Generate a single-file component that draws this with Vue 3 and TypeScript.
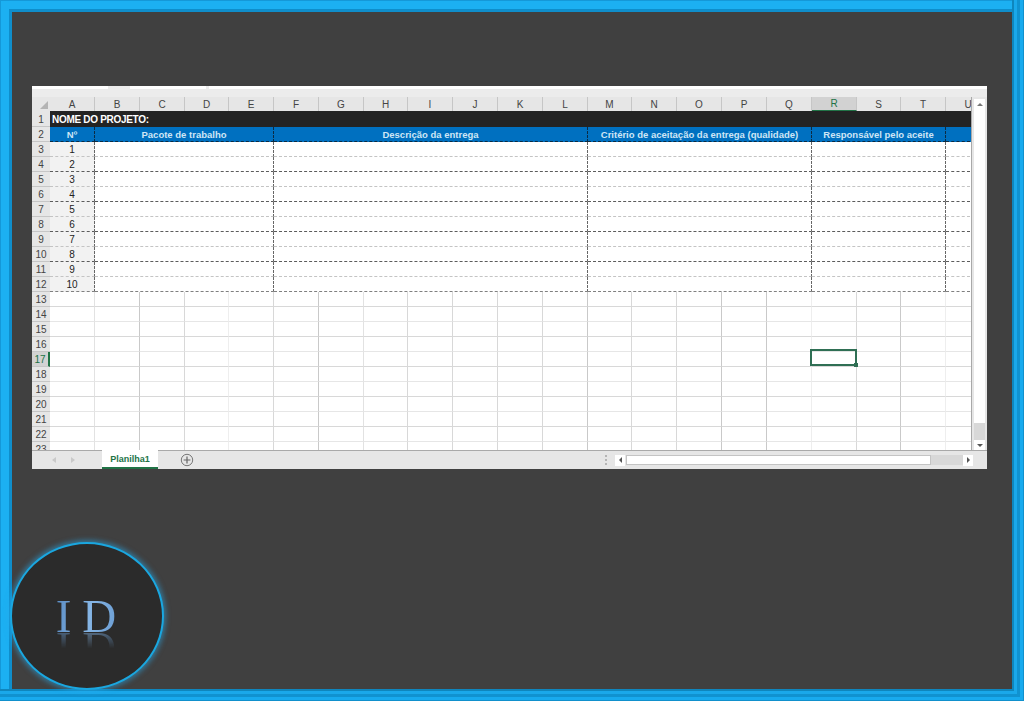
<template>
  <div class="page">
    <div class="sheet">
      <div class="top-strip">
        <span class="piece p1"></span>
        <span class="piece p2"></span>
        <span class="piece p3"></span>
      </div>
      <div class="grid">
        <div class="corner"><span class="tri"></span></div>
        <div
          v-for="c in columns"
          :key="c"
          class="col-head"
          :class="{ picked: c === 'R' }"
        >{{ c }}</div>

        <div class="row-head">1</div>
        <div class="title">NOME DO PROJETO:</div>

        <div class="row-head">2</div>
        <div
          v-for="h in headers"
          :key="h.label"
          class="blue"
          :style="{ gridColumn: `span ${h.span}` }"
        >{{ h.label }}</div>

        <template v-for="n in 10" :key="n">
          <div class="row-head">{{ n + 2 }}</div>
          <div class="num" :class="rowLine(n)">{{ n }}</div>
          <div
            v-for="h in headers.slice(1)"
            :key="h.span + h.label"
            class="entry"
            :class="rowLine(n)"
            :style="{ gridColumn: `span ${h.span}` }"
          ></div>
        </template>

        <template v-for="r in emptyRows" :key="r">
          <div class="row-head" :class="{ active: r === 17 }">{{ r }}</div>
          <div
            v-for="(c, i) in columns"
            :key="c"
            class="cell"
            :class="[`v${lineWeights[i]}`, r % 2 ? 'h1' : 'h2']"
          >
            <div v-if="r === 17 && c === 'R'" class="selection"><span class="handle"></span></div>
          </div>
        </template>
      </div>

      <div class="vscroll">
        <button class="sq"><span class="up"></span></button>
        <div class="thumb"></div>
        <div class="track"></div>
        <button class="sq"><span class="down"></span></button>
      </div>

      <div class="tabs">
        <div class="nav">
          <span class="arrow left"></span>
          <span class="arrow right"></span>
        </div>
        <div class="tab">Planilha1</div>
        <div class="add">
          <svg width="14" height="14" viewBox="0 0 14 14">
            <circle cx="7" cy="7" r="5.7" fill="none" stroke="#777" stroke-width="1" />
            <path d="M7 3.6v6.8M3.6 7h6.8" stroke="#666" stroke-width="1.2" />
          </svg>
        </div>
        <div class="dots"><i></i><i></i><i></i></div>
        <div class="hscroll">
          <button class="sq"><span class="tleft"></span></button>
          <div class="hthumb"></div>
          <div class="htrack"></div>
          <button class="sq"><span class="tright"></span></button>
        </div>
      </div>
    </div>

    <div class="logo">
      <span class="letters">I D</span>
    </div>
  </div>
</template>

<script setup lang="ts">
const columns = 'ABCDEFGHIJKLMNOPQRSTU'.split('')

const headers = [
  { label: 'Nº', span: 1 },
  { label: 'Pacote de trabalho', span: 4 },
  { label: 'Descrição da entrega', span: 7 },
  { label: 'Critério de aceitação da entrega (qualidade)', span: 5 },
  { label: 'Responsável pelo aceite', span: 3 },
  { label: '', span: 1 },
]

const emptyRows = Array.from({ length: 11 }, (_, i) => i + 13)

// the blurry capture draws some gridlines stronger than others
const lineWeights = [1, 3, 2, 0, 2, 3, 1, 2, 2, 2, 2, 3, 2, 2, 3, 3, 0, 2, 3, 0, 3]

function rowLine(n: number) {
  if (n === 10) return 'end'
  return n % 2 ? 'soft' : 'hard'
}
</script>

<style>
html,
body {
  margin: 0;
  background: #404040;
}
</style>

<style scoped>
.page {
  position: relative;
  width: 1024px;
  height: 701px;
  box-sizing: border-box;
  padding: 86px 0 0 32px;
  overflow: hidden;
  background: #404040;
  font-family: "Liberation Sans", Arial, sans-serif;
  box-shadow:
    inset -1px -1px 0 #1190cc,
    inset -4px -4px 0 #18aaee,
    inset -7px -7px 0 #1092d0,
    inset -10px -10px 0 #1aa8ea,
    inset -12px -12px 0 #0f86bd,
    inset 1px 1px 0 #1598d8,
    inset 9px 9px 0 #1cb0f2,
    inset 12px 12px 0 #0f8ecb;
}
.sheet {
  width: 955px;
  height: 383px;
  background: #e6e6e6;
  overflow: hidden;
  display: grid;
  grid-template-columns: 940px 15px;
  grid-template-rows: 11px 353px 19px;
}
.top-strip {
  grid-column: 1 / 3;
  display: flex;
  align-items: flex-start;
  background: #ececec;
}
.piece {
  height: 3px;
  background: #fff;
}
.p1 { width: 76px; }
.p2 { width: 76px; margin-left: 22px; }
.p3 { flex: 1; margin-left: 3px; }
.grid {
  display: grid;
  grid-template-columns: 18px 45px 45px 45px 44px 45px 45px 45px 44px 45px 45px 45px 45px 44px 45px 45px 45px 45px 45px 44px 45px 45px;
  grid-template-rows: 14px 16px 15px repeat(10, 15px) repeat(11, 15px);
  background: #fff;
  overflow: hidden;
  border-right: 1px solid #a9a9a9;
  font-size: 10px;
  color: #333;
}
.corner {
  background: #e6e6e6;
  position: relative;
}
.tri {
  position: absolute;
  right: 2px;
  bottom: 2px;
  width: 0;
  height: 0;
  border-style: solid;
  border-width: 0 0 8px 8px;
  border-color: transparent transparent #b4b4b4 transparent;
}
.col-head {
  display: flex;
  align-items: center;
  justify-content: center;
  background: #e6e6e6;
  border-right: 1px solid #c6c6c6;
  box-sizing: border-box;
  color: #444;
}
.picked {
  background: #d2d2d2;
  border-bottom: 1px solid #217346;
  color: #217346;
}
.row-head {
  display: flex;
  align-items: center;
  justify-content: center;
  background: #e6e6e6;
  border-bottom: 1px solid #c6c6c6;
  box-sizing: border-box;
  color: #444;
  font-size: 10px;
  padding-top: 1px;
}
.row-head.active {
  background: #d2d2d2;
  border-right: 2px solid #217346;
  color: #217346;
}
.title {
  grid-column: span 21;
  display: flex;
  align-items: center;
  background: #232323;
  color: #fff;
  font-weight: bold;
  font-size: 10px;
  letter-spacing: -0.3px;
  padding-left: 2px;
}
.blue {
  display: flex;
  align-items: center;
  justify-content: center;
  box-sizing: border-box;
  background: #0070c0;
  color: #cfe6f5;
  font-weight: bold;
  font-size: 9.5px;
  border-right: 1px dashed #0b2b44;
  border-bottom: 1px dashed #0b2b44;
  white-space: nowrap;
  overflow: hidden;
}
.num {
  display: flex;
  align-items: center;
  justify-content: center;
  box-sizing: border-box;
  background: #f2f2f2;
  color: #222;
  font-size: 10px;
  border-right: 1px dashed #666;
}
.entry {
  box-sizing: border-box;
  background: #fff;
  border-right: 1px dashed #666;
}
.soft {
  border-bottom: 1px dashed #c4c4c4;
}
.hard {
  border-bottom: 1px dashed #5c5c5c;
}
.end {
  border-bottom: 1px dashed #808080;
}
.cell {
  position: relative;
  box-sizing: border-box;
  background: #fff;
}
.v0 { border-right: 1px solid #eeeeee; }
.v1 { border-right: 1px solid #e2e2e2; }
.v2 { border-right: 1px solid #d8d8d8; }
.v3 { border-right: 1px solid #c9c9c9; }
.h1 { border-bottom: 1px solid #d8d8d8; }
.h2 { border-bottom: 1px solid #e6e6e6; }
.selection {
  position: absolute;
  left: -2px;
  top: -3px;
  width: 47px;
  height: 17px;
  box-sizing: border-box;
  border: 2px solid #2f6f54;
  z-index: 2;
}
.handle {
  position: absolute;
  right: -3px;
  bottom: -3px;
  width: 4px;
  height: 4px;
  background: #2f6f54;
}
.vscroll {
  display: flex;
  flex-direction: column;
  align-items: center;
  background: #e6e6e6;
  padding-top: 2px;
}
.vscroll .sq {
  width: 11px;
  height: 10px;
  flex: none;
}
.sq {
  display: flex;
  align-items: center;
  justify-content: center;
  padding: 0;
  border: none;
  background: #fff;
}
.up,
.down,
.tleft,
.tright {
  width: 0;
  height: 0;
  border-style: solid;
}
.up {
  border-width: 0 3px 3px 3px;
  border-color: transparent transparent #777 transparent;
}
.down {
  border-width: 3px 3px 0 3px;
  border-color: #555 transparent transparent transparent;
}
.thumb {
  width: 11px;
  height: 314px;
  flex: none;
  background: #fff;
}
.track {
  width: 11px;
  flex: 1;
  background: #d8d8d8;
}
.tabs {
  grid-column: 1 / 3;
  display: flex;
  align-items: stretch;
  background: #e6e6e6;
  border-top: 1px solid #a9a9a9;
  box-sizing: border-box;
}
.nav {
  width: 70px;
  flex: none;
  display: flex;
  align-items: center;
  gap: 15px;
  padding-left: 20px;
  box-sizing: border-box;
}
.arrow {
  width: 0;
  height: 0;
  border-style: solid;
}
.arrow.left {
  border-width: 3px 4px 3px 0;
  border-color: transparent #c9c9c9 transparent transparent;
}
.arrow.right {
  border-width: 3px 0 3px 4px;
  border-color: transparent transparent transparent #c9c9c9;
}
.tab {
  width: 56px;
  flex: none;
  margin-top: -1px;
  display: flex;
  align-items: center;
  justify-content: center;
  box-sizing: border-box;
  background: #fff;
  border-bottom: 2px solid #217346;
  color: #217346;
  font-weight: bold;
  font-size: 9px;
}
.add {
  margin-left: 22px;
  width: 14px;
  display: flex;
  align-items: center;
}
.dots {
  margin-left: 409px;
  width: 5px;
  display: flex;
  flex-direction: column;
  align-items: center;
  justify-content: center;
  gap: 2px;
}
.dots i {
  width: 2px;
  height: 2px;
  background: #b5b5b5;
}
.hscroll {
  margin-left: 7px;
  width: 358px;
  display: flex;
  align-items: center;
  box-sizing: border-box;
}
.hscroll .sq {
  width: 10px;
  height: 11px;
  flex: none;
}
.tleft {
  border-width: 3px 3px 3px 0;
  border-color: transparent #555 transparent transparent;
}
.tright {
  border-width: 3px 0 3px 3px;
  border-color: transparent transparent transparent #555;
}
.hthumb {
  width: 305px;
  height: 10px;
  margin-left: 1px;
  flex: none;
  background: #fff;
  border: 1px solid #c4c4c4;
  box-sizing: border-box;
}
.htrack {
  flex: 1;
  height: 10px;
  background: #d8d8d8;
}
.logo {
  position: absolute;
  left: 10px;
  top: 542px;
  width: 154px;
  height: 148px;
  box-sizing: border-box;
  border-radius: 50%;
  background: #2b2b2b;
  border: 2px solid #1aa7e0;
  box-shadow: 0 0 5px 2px rgba(40, 170, 235, 0.5);
  display: flex;
  align-items: center;
  justify-content: center;
}
.letters {
  font-family: "Liberation Serif", serif;
  font-size: 47px;
  line-height: 1;
  word-spacing: -1px;
  margin-right: 2px;
  background: linear-gradient(100deg, #5a8cc4, #86b6e6 55%, #6a9cd2);
  -webkit-background-clip: text;
  background-clip: text;
  color: transparent;
  -webkit-box-reflect: below -15px linear-gradient(transparent 50%, rgba(255, 255, 255, 0.7));
}
</style>
